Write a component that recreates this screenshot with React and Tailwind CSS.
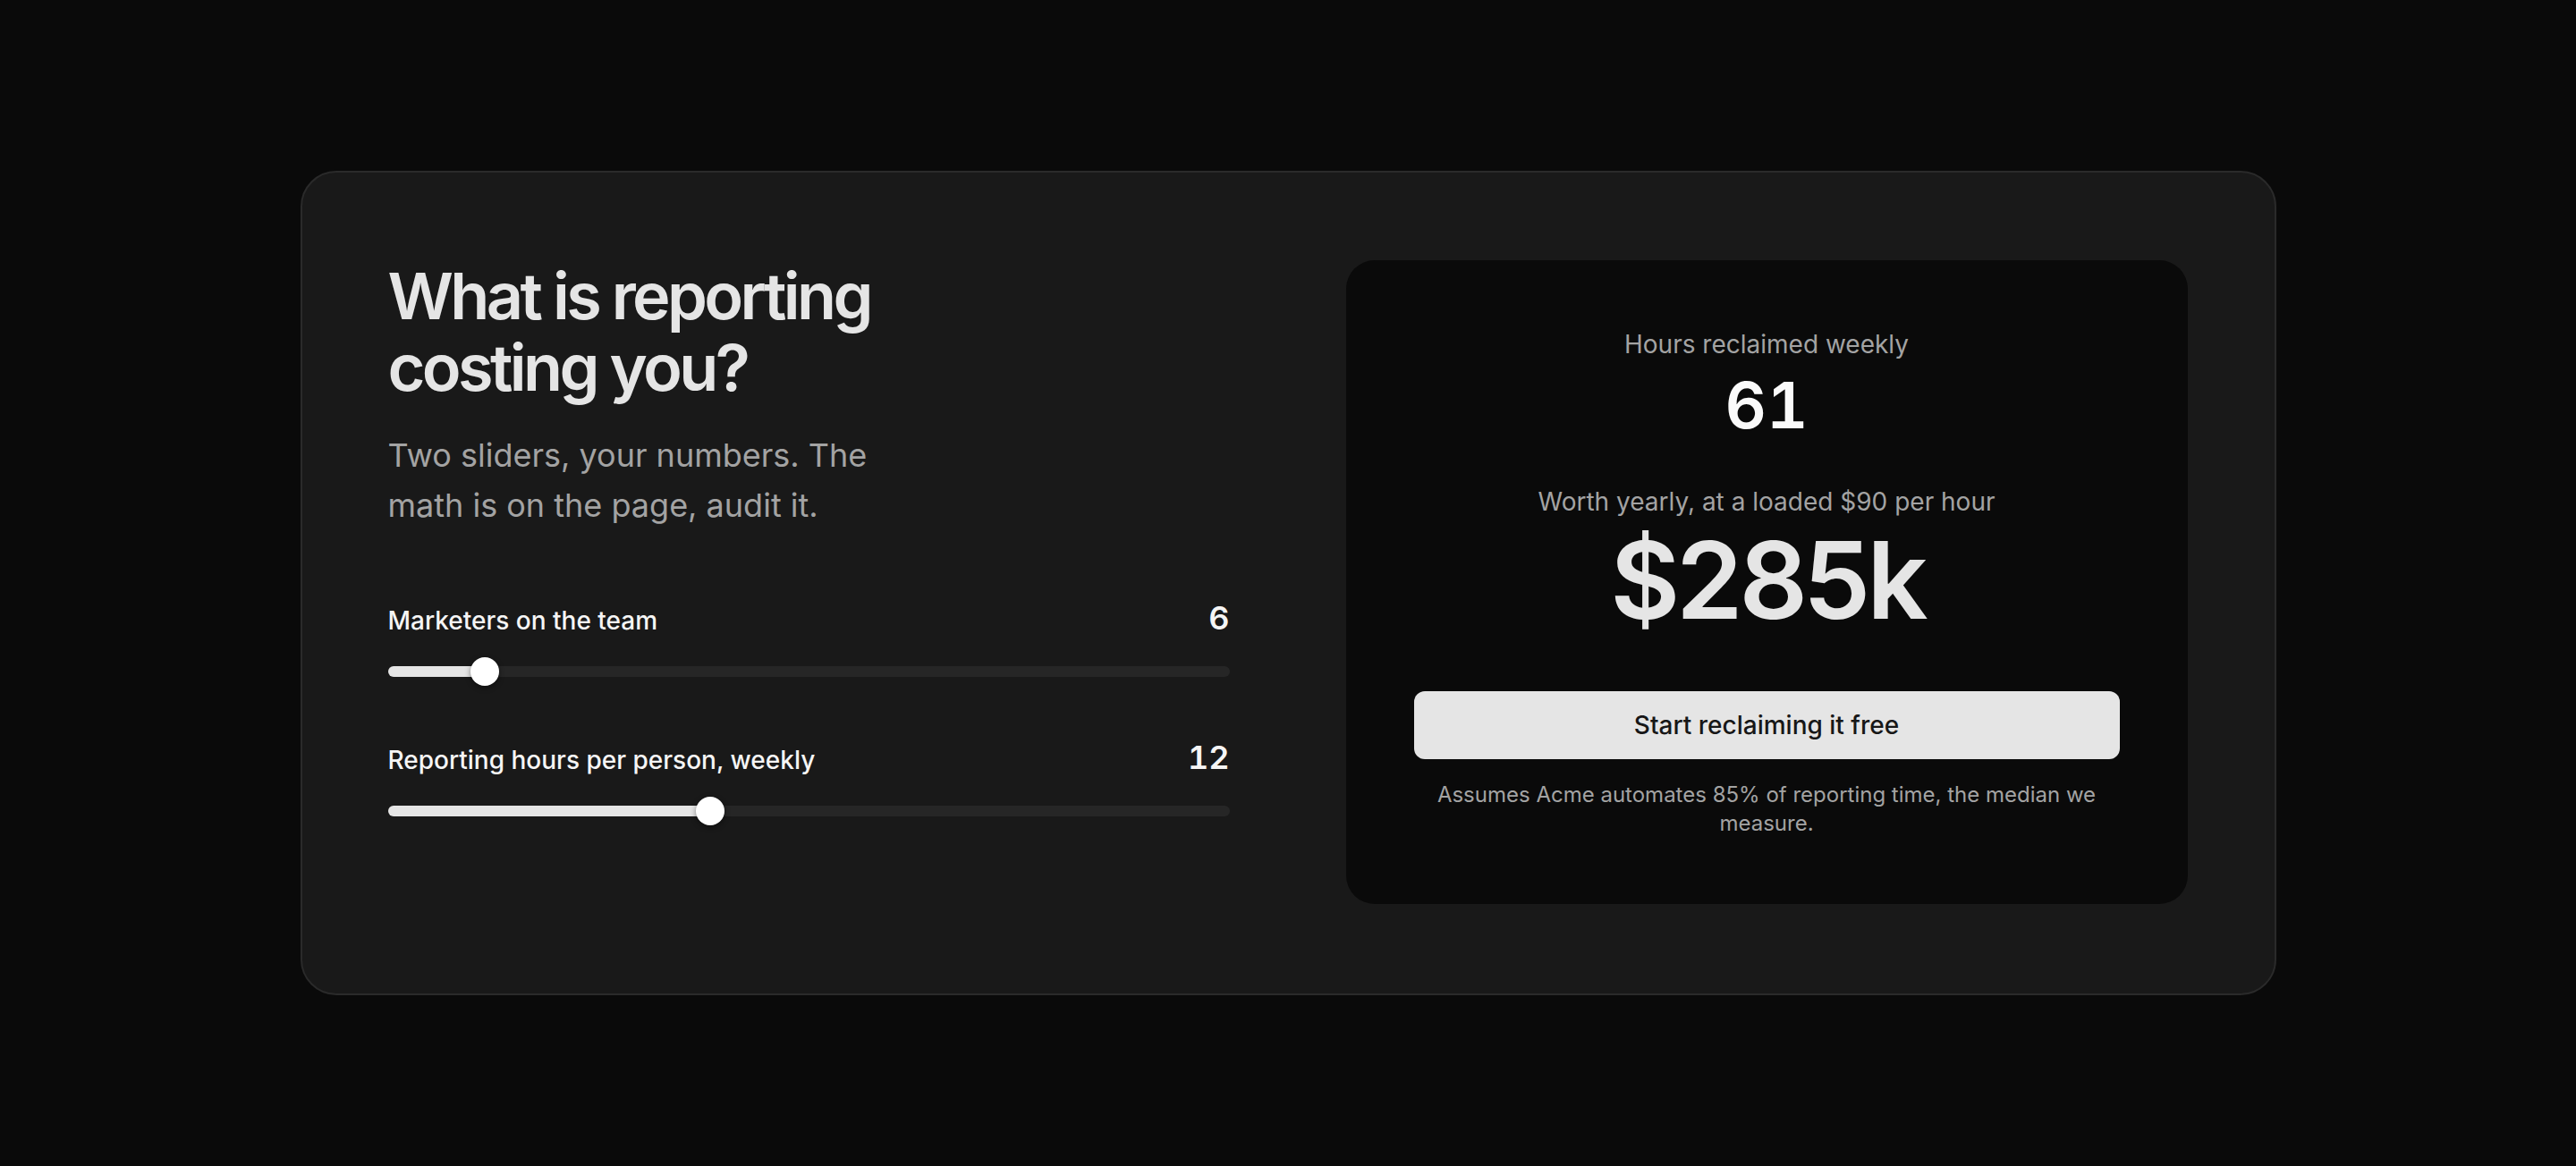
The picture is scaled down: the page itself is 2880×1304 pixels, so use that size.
import React, { useState } from 'react';

function RangeRow({ label, value, min, max, onChange }) {
    const pct = (value - min) / (max - min);
    // thumb travels inside the track, like a native range input
    const pos = `calc(16px + ${pct} * (100% - 32px))`;

    return (
        <div>
            <div className="flex items-baseline justify-between">
                <span className="text-[28px] leading-[40px] font-medium text-[#f5f5f5]">{label}</span>
                <span className="text-[36px] leading-[56px] font-semibold text-[#f5f5f5] tabular-nums">{value}</span>
            </div>
            <div className="relative mt-[16px] h-8">
                <div className="absolute inset-x-0 top-1/2 -translate-y-1/2 h-3 rounded-full bg-[#262626]" />
                <div
                    className="absolute left-0 top-1/2 -translate-y-1/2 h-3 rounded-full bg-[#e5e5e5]"
                    style={{ width: pos }}
                />
                <div
                    className="absolute top-0 w-8 h-8 -translate-x-1/2 rounded-full bg-white shadow-[0_2px_6px_rgba(0,0,0,0.45)]"
                    style={{ left: pos }}
                />
                <input
                    type="range"
                    min={min}
                    max={max}
                    value={value}
                    onChange={(e) => onChange(Number(e.target.value))}
                    className="absolute inset-0 w-full h-full opacity-0 cursor-pointer"
                />
            </div>
        </div>
    );
}

export default function App() {
    const [people, setPeople] = useState(6);
    const [hours, setHours] = useState(12);

    const reclaimed = Math.round(people * hours * 0.85);
    const yearly = Math.round((reclaimed * 90 * 52) / 1000);

    return (
        <main className="min-h-screen w-full bg-[#0a0a0a] flex items-center justify-center font-['Inter','Liberation_Sans',sans-serif] antialiased">
            <section className="w-[2209px] rounded-[40px] border-2 border-[#2a2a2a] bg-[#191919] pl-[96px] pr-[97px] pt-[98px] pb-[100px]">
                <div className="grid grid-cols-2 gap-[130px]">

                    {/* Left column: copy + sliders */}
                    <div>
                        <div className="max-w-[600px]">
                            <h2 className="text-[72px] leading-[80px] font-semibold tracking-[-0.05em] text-[#e5e5e5]">
                                What is reporting costing you?
                            </h2>
                            <p className="mt-[30px] text-[36px] leading-[56px] text-[#a3a3a3]">
                                Two sliders, your numbers. The math is on the page, audit it.
                            </p>
                        </div>

                        <div className="mt-[70px] flex flex-col gap-[52px]">
                            <RangeRow label="Marketers on the team" value={people} min={1} max={50} onChange={setPeople} />
                            <RangeRow label="Reporting hours per person, weekly" value={hours} min={1} max={30} onChange={setHours} />
                        </div>
                    </div>

                    {/* Right column: result panel */}
                    <div className="rounded-[32px] bg-[#0a0a0a] px-[76px] py-[74px] flex flex-col justify-center items-center text-center">
                        <p className="text-[28px] leading-[40px] text-[#a3a3a3]">Hours reclaimed weekly</p>
                        <p className="mt-2 text-[72px] leading-[80px] font-semibold text-[#fafafa] tabular-nums">{reclaimed}</p>

                        <p className="mt-12 text-[28px] leading-[40px] text-[#a3a3a3]">Worth yearly, at a loaded $90 per hour</p>
                        <p className="mt-2 text-[120px] leading-[120px] font-semibold tracking-[-0.05em] text-[#e5e5e5] tabular-nums">
                            ${yearly}k
                        </p>

                        <button className="mt-16 w-full h-[76px] rounded-[12px] bg-[#e5e5e5] text-[28px] font-medium text-[#171717]">
                            Start reclaiming it free
                        </button>
                        <p className="mt-6 text-[24px] leading-[32px] text-[#a3a3a3]">
                            Assumes Acme automates 85% of reporting time, the median we measure.
                        </p>
                    </div>

                </div>
            </section>
        </main>
    );
}
